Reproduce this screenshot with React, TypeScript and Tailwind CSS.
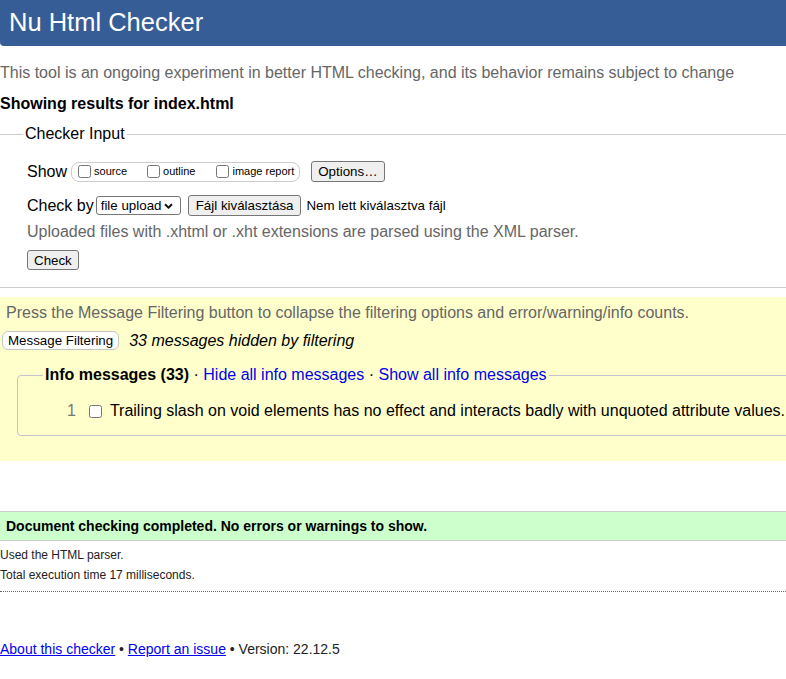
import type { ReactNode } from 'react';

function Btn({ children, className = '' }: { children: ReactNode; className?: string }) {
  return (
    <button
      type="button"
      className={
        'flex items-center rounded-[3px] border border-[#767676] bg-[#efefef] px-[6px] text-[13.33px] leading-[15px] text-black ' +
        className
      }
    >
      {children}
    </button>
  );
}

function Check({ className = '' }: { className?: string }) {
  return <input type="checkbox" className={'m-0 h-[13px] w-[13px] shrink-0 ' + className} />;
}

export default function App() {
  return (
    <div className="min-h-screen w-full overflow-hidden bg-white font-['Liberation_Sans',Arial,sans-serif] text-[16px] leading-[18px] text-black">
      {/* Title bar */}
      <h1 className="h-[46px] rounded-bl-[4px] bg-[#365d95] pl-[9px] pt-[7px] text-[25.5px] font-normal leading-[30px] text-white">
        Nu Html Checker
      </h1>

      <p className="mt-[18px] whitespace-nowrap text-[#666]">
        This tool is an ongoing experiment in better HTML checking, and its behavior remains subject to change
      </p>
      <p className="mt-[13px] font-bold">Showing results for index.html</p>

      {/* Checker input */}
      <fieldset className="mt-[12px] border-y border-[#ccc] pb-[17px] pl-[27px] pt-[18px]">
        <legend className="ml-[-4px] px-[2px]">Checker Input</legend>

        <div className="flex h-[21px] items-center">
          <span>Show</span>
          <span className="ml-[4px] flex h-[20px] items-center rounded-[8px] border border-[#ccc] pl-[6px] pr-[5px] text-[11px] leading-[13px]">
            <Check />
            <span className="ml-[3px]">source</span>
            <Check className="ml-[20px]" />
            <span className="ml-[3px]">outline</span>
            <Check className="ml-[21px]" />
            <span className="ml-[3px]">image report</span>
          </span>
          <Btn className="ml-[11px] h-[21px]">Options…</Btn>
        </div>

        <div className="mt-[13px] flex h-[21px] items-center">
          <span>Check by</span>
          <span className="ml-[2px] flex h-[19px] w-[85px] items-center rounded-[3px] border border-[#767676] pl-[4px] text-[13.33px] leading-[15px]">
            <span className="flex-1">file upload</span>
            <svg width="9" height="6" viewBox="0 0 9 6" className="mr-[7px]">
              <path d="M1 1.2 L4.5 4.6 L8 1.2" fill="none" stroke="#111" strokeWidth="2" />
            </svg>
          </span>
          <Btn className="ml-[7px] h-[21px] px-[7px]">Fájl kiválasztása</Btn>
          <span className="ml-[5px] text-[13.33px] leading-[15px]">Nem lett kiválasztva fájl</span>
        </div>

        <p className="mt-[7px] text-[#666]">Uploaded files with .xhtml or .xht extensions are parsed using the XML parser.</p>

        <Btn className="mt-[9px] h-[20px]">Check</Btn>
      </fieldset>

      {/* Message filtering */}
      <div className="mt-[9px] bg-[#ffffcc] pb-[25px] pt-[7px]">
        <p className="ml-[6px] text-[#666]">
          Press the Message Filtering button to collapse the filtering options and error/warning/info counts.
        </p>
        <div className="mt-[9px] flex h-[19px] items-center">
          <button
            type="button"
            className="ml-[2px] flex h-[19px] items-center rounded-[6px] border border-[#c4c4c4] bg-white px-[5px] text-[13.33px] leading-[15px]"
          >
            Message Filtering
          </button>
          <span className="ml-[10px] italic">33 messages hidden by filtering</span>
        </div>

        <fieldset className="ml-[17px] mr-[-40px] mt-[16px] rounded-[4px] border border-[#c3c3d0] pb-[15px] pl-[25px] pt-[18px]">
          <legend className="whitespace-nowrap px-[2px]">
            <strong>Info messages (33)</strong> · <a className="text-[#0000ee]">Hide all info messages</a> ·{' '}
            <a className="text-[#0000ee]">Show all info messages</a>
          </legend>
          <div className="flex h-[18px] items-center whitespace-nowrap">
            <span className="ml-[24px] text-[#777]">1</span>
            <Check className="ml-[13px]" />
            <span className="ml-[8px]">
              Trailing slash on void elements has no effect and interacts badly with unquoted attribute values.
            </span>
          </div>
        </fieldset>
      </div>

      {/* Result */}
      <div className="mt-[50px] border-y border-[#ccc] bg-[#ccffcc] px-[6px] py-[6px] text-[14px] font-bold leading-[16px]">
        Document checking completed. No errors or warnings to show.
      </div>
      <p className="mt-[7px] text-[12px] leading-[14px] text-[#222]">Used the HTML parser.</p>
      <p className="mt-[6px] text-[12px] leading-[14px] text-[#222]">Total execution time 17 milliseconds.</p>
      <div className="mt-[9px] border-t border-dotted border-[#666]" />

      {/* Footer */}
      <p className="mt-[49px] text-[14px] leading-[16px] text-[#222]">
        <a className="text-[#0000ee] underline">About this checker</a> •{' '}
        <a className="text-[#0000ee] underline">Report an issue</a> • Version: 22.12.5
      </p>
    </div>
  );
}
